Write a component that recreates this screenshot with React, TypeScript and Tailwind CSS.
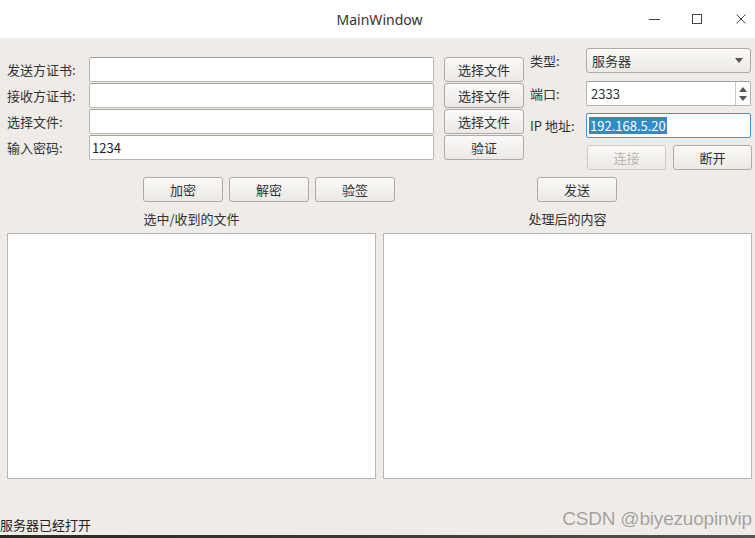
const font = { fontFamily: '"Noto Sans CJK SC", "Noto Sans", sans-serif' };

function Btn({ label, w = "w-[80px]", disabled = false }: { label: string; w?: string; disabled?: boolean }) {
  return (
    <div
      className={`${w} h-[25px] shrink-0 flex items-center justify-center rounded-[3px] border text-[13px] bg-gradient-to-b from-[#fbfaf9] to-[#ebe8e5] ${
        disabled ? "border-[#cdc9c4] text-[#b9b5b0]" : "border-[#aeaaa5] text-[#2e3436]"
      }`}
    >
      {label}
    </div>
  );
}

function Field({ value = "", w = "w-[345px]" }: { value?: string; w?: string }) {
  return (
    <div className={`${w} h-[25px] shrink-0 flex items-center px-[2px] bg-white rounded-[2px] border border-[#b9b5b0] border-t-[#a29e99] text-[13px] text-[#222]`}>
      {value}
    </div>
  );
}

export default function App() {
  const rows = [
    { label: "发送方证书:", value: "", btn: "选择文件" },
    { label: "接收方证书:", value: "", btn: "选择文件" },
    { label: "选择文件:", value: "", btn: "选择文件" },
    { label: "输入密码:", value: "1234", btn: "验证" },
  ];
  return (
    <div className="w-[755px] h-[538px] overflow-hidden flex flex-col bg-[#efebe7] text-[#2e3436]" style={font}>
      {/* title bar */}
      <div className="h-[38px] shrink-0 bg-white flex items-center relative">
        <div className="flex-1 text-center text-[14px] text-[#333] pl-[4px]" style={{ fontFamily: '"Noto Sans", sans-serif' }}>
          MainWindow
        </div>
        <div className="absolute right-[9px] top-0 h-[38px] flex items-center">
          <div className="w-[11px] h-px bg-[#444]" />
          <div className="ml-[32px] w-[10px] h-[10px] border border-[#444]" />
          <svg className="ml-[34px]" width="10" height="10" viewBox="0 0 10 10">
            <path d="M0.5 0.5 L9.5 9.5 M9.5 0.5 L0.5 9.5" stroke="#444" strokeWidth="1" />
          </svg>
        </div>
      </div>

      <div className="flex-1 flex flex-col">
        {/* top area */}
        <div className="flex">
          <div className="pl-[7px] pt-[19px] flex flex-col gap-[1px]">
            {rows.map((r) => (
              <div key={r.label} className="flex items-center h-[25px]">
                <div className="w-[82px] text-[13px]">{r.label}</div>
                <Field value={r.value} />
                <div className="ml-[10px]">
                  <Btn label={r.btn} />
                </div>
              </div>
            ))}
          </div>
          <div className="ml-[6px] pt-[10px] flex flex-col">
            <div className="flex items-center h-[25px]">
              <div className="w-[56px] text-[13px]">类型:</div>
              <div className="w-[165px] h-[25px] flex items-center justify-between pl-[5px] pr-[7px] rounded-[3px] border border-[#aeaaa5] bg-gradient-to-b from-[#fbfaf9] to-[#ebe8e5] text-[13px]">
                <span>服务器</span>
                <svg width="8" height="5" viewBox="0 0 8 5">
                  <path d="M0 0 H8 L4 5 Z" fill="#555" />
                </svg>
              </div>
            </div>
            <div className="flex items-center h-[25px] mt-[8px]">
              <div className="w-[56px] text-[13px]">端口:</div>
              <div className="w-[165px] h-[25px] flex items-center bg-white rounded-[2px] border border-[#b9b5b0] border-t-[#a29e99] text-[13px]">
                <span className="flex-1 pl-[4px]">2333</span>
                <div className="w-[15px] h-full border-l border-[#cfcbc6] flex flex-col items-center justify-center gap-[4px]">
                  <svg width="8" height="5" viewBox="0 0 8 5">
                    <path d="M0 5 H8 L4 0 Z" fill="#555" />
                  </svg>
                  <svg width="8" height="5" viewBox="0 0 8 5">
                    <path d="M0 0 H8 L4 5 Z" fill="#555" />
                  </svg>
                </div>
              </div>
            </div>
            <div className="flex items-center h-[25px] mt-[7px]">
              <div className="w-[56px] text-[13px]">IP 地址:</div>
              <div className="w-[165px] h-[25px] flex items-center bg-white rounded-[2px] border border-[#4a90d9] text-[13px]">
                <span className="ml-[2px] bg-[#308cc6] text-white leading-[17px] px-px">192.168.5.20</span>
              </div>
            </div>
            <div className="flex h-[25px] mt-[7px] ml-[57px] gap-[7px]">
              <Btn label="连接" w="w-[79px]" disabled />
              <Btn label="断开" w="w-[79px]" />
            </div>
          </div>
        </div>

        {/* action buttons */}
        <div className="flex mt-[7px]">
          <div className="ml-[143px] flex gap-[6px]">
            <Btn label="加密" />
            <Btn label="解密" />
            <Btn label="验签" />
          </div>
          <div className="ml-[142px]">
            <Btn label="发送" />
          </div>
        </div>

        {/* text panes */}
        <div className="flex pl-[7px] mt-[8px] gap-[7px]">
          <div className="w-[369px] flex flex-col">
            <div className="h-[23px] text-center text-[13px] leading-[17px]">选中/收到的文件</div>
            <div className="h-[246px] bg-white border border-[#b9b5b0]" />
          </div>
          <div className="w-[369px] flex flex-col">
            <div className="h-[23px] text-center text-[13px] leading-[17px]">处理后的内容</div>
            <div className="h-[246px] bg-white border border-[#b9b5b0]" />
          </div>
        </div>

        {/* status bar */}
        <div className="flex-1 flex items-end justify-between">
          <div className="text-[13px] text-[#222] leading-[20px]">服务器已经打开</div>
          <div
            className="text-[19px] leading-[22px] text-[#a3a09c] mr-[3px] mb-[5px] tracking-[-0.2px]"
            style={{ fontFamily: '"Liberation Sans", Arial, sans-serif', textShadow: "0 0 1px #fff" }}
          >
            CSDN @biyezuopinvip
          </div>
        </div>
      </div>
      <div className="h-[3px] shrink-0 bg-gradient-to-r from-[#2a2a22] via-[#3b3a30] to-[#555]" />
    </div>
  );
}
